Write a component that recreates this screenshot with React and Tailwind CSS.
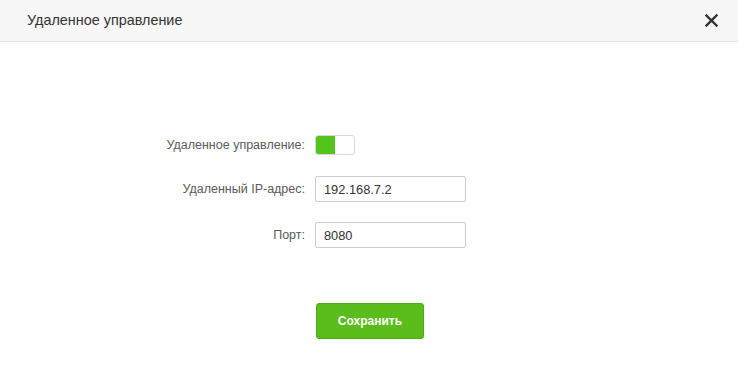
import { useState } from 'react';

export default function App() {
  const [enabled, setEnabled] = useState(true);
  const [ip, setIp] = useState('192.168.7.2');
  const [port, setPort] = useState('8080');

  return (
    <div className="h-[368px] w-[738px] bg-white font-['Liberation_Sans',Arial,sans-serif] text-[#333]">
      <div className="flex h-[42px] items-center justify-between border-b border-[#e5e5e5] bg-[#f7f7f7] pl-[27px] pr-[17px]">
        <h2 className="text-[14.4px] text-[#333]">Удаленное управление</h2>
        <button type="button" className="flex h-5 w-5 items-center justify-center text-[#333]" aria-label="Close">
          <svg width="13" height="13" viewBox="0 0 13 13">
            <path d="M1.5 1.5L11.5 11.5M11.5 1.5L1.5 11.5" stroke="currentColor" strokeWidth="2.4" strokeLinecap="square" />
          </svg>
        </button>
      </div>

      <div className="flex flex-col pt-[93px]">
        <div className="flex items-center">
          <label className="w-[305px] text-right text-[12.5px] text-[#5a5a5a]">Удаленное управление:</label>
          <button
            type="button"
            onClick={() => setEnabled(!enabled)}
            className="ml-[10px] flex h-[20px] w-[40px] overflow-hidden rounded-[3px] border border-[#d9d9d9] bg-white"
          >
            <span className={`h-full w-[19px] ${enabled ? 'bg-[#52c41a]' : 'ml-auto bg-[#ccc]'}`} />
          </button>
        </div>

        <div className="mt-[21px] flex items-center">
          <label className="w-[305px] text-right text-[12.5px] text-[#5a5a5a]">Удаленный IP-адрес:</label>
          <input
            value={ip}
            onChange={(e) => setIp(e.target.value)}
            className="ml-[10px] h-[26px] w-[151px] rounded-[2px] border border-[#ccc] px-[8px] text-[12.8px] text-[#333] outline-none"
          />
        </div>

        <div className="mt-[20px] flex items-center">
          <label className="w-[305px] text-right text-[12.5px] text-[#5a5a5a]">Порт:</label>
          <input
            value={port}
            onChange={(e) => setPort(e.target.value)}
            className="ml-[10px] h-[26px] w-[151px] rounded-[2px] border border-[#ccc] px-[8px] text-[12.8px] text-[#333] outline-none"
          />
        </div>

        <div className="mt-[55px] pl-[316px]">
          <button
            type="button"
            className="h-[36px] w-[108px] rounded-[3px] border border-[#4cad12] bg-[#5bbd1c] text-[12px] font-bold text-white"
          >
            Сохранить
          </button>
        </div>
      </div>
    </div>
  );
}
